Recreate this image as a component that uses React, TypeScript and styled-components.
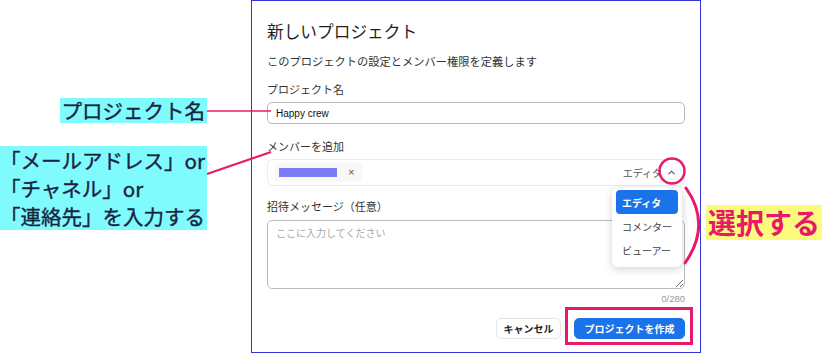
import React from "react";
import styled, { createGlobalStyle } from "styled-components";

const PINK = "#e8196b";
const BLUE = "#1a73e8";

const GlobalStyle = createGlobalStyle`
  html, body { margin: 0; padding: 0; background: #ffffff; }
  body { font-family: "Noto Sans CJK JP", "Noto Sans", sans-serif; }
  * { box-sizing: border-box; }
`;

const Stage = styled.div`
  position: relative;
  width: 822px;
  height: 354px;
  display: flex;
  overflow: hidden;
`;

const LeftColumn = styled.div`
  width: 251px;
  flex: none;
  display: flex;
  flex-direction: column;
  align-items: flex-end;
  padding: 98px 44px 0 0;
  gap: 23px;
`;

const Callout = styled.div<{ $lh: number }>`
  background: #80fbfd;
  color: #17243f;
  font-size: 20.5px;
  font-weight: 400;
  -webkit-text-stroke: 0.35px #17243f;
  line-height: ${(p) => p.$lh}px;
  white-space: nowrap;
  padding: 0 2px;
`;

const RightColumn = styled.div`
  flex: 1;
  padding: 205px 0 0 5px;
`;

const Highlight = styled.span`
  display: inline-block;
  background: #fbfb7e;
  color: ${PINK};
  font-size: 28px;
  font-weight: 700;
  line-height: 35px;
  padding: 0 2px;
  white-space: nowrap;
`;

const Dialog = styled.div`
  width: 450px;
  height: 353px;
  flex: none;
  border: 1px solid #3535d5;
  background: #fff;
  padding: 20px 15px 0 15px;
  display: flex;
  flex-direction: column;
`;

const Title = styled.h1`
  margin: 0;
  font-size: 16.7px;
  font-weight: 400;
  line-height: 20px;
  color: #1f1f1f;
`;

const Subtitle = styled.p`
  margin: 12px 0 0;
  font-size: 11.25px;
  line-height: 16px;
  color: #333;
`;

const Field = styled.div<{ $mt: number; $gap: number }>`
  margin-top: ${(p) => p.$mt}px;
  display: flex;
  flex-direction: column;
  gap: ${(p) => p.$gap}px;
`;

const Label = styled.label`
  font-size: 11px;
  line-height: 14px;
  color: #333;
`;

const TextInput = styled.div`
  height: 22px;
  border: 1px solid #b8b8b8;
  border-radius: 5px;
  padding: 0 8px;
  display: flex;
  align-items: center;
  font-family: "Liberation Sans", Arial, sans-serif;
  font-size: 10px;
  color: #111;
`;

const MemberBox = styled.div`
  position: relative;
  height: 27px;
  border: 1px solid #ececec;
  border-radius: 6px;
  display: flex;
  align-items: center;
  padding: 0 7px 0 7px;
`;

const Chip = styled.div`
  display: flex;
  align-items: center;
  gap: 11px;
  height: 19px;
  padding: 0 8px 0 4px;
  background: #f8f8f8;
  border-radius: 4px;
`;

const ChipSwatch = styled.span`
  display: block;
  width: 58px;
  height: 9px;
  background: #7c7cf6;
`;

const ChipClose = styled.span`
  font-family: "Liberation Sans", Arial, sans-serif;
  font-size: 11px;
  line-height: 1;
  color: #555;
`;

const RoleSelect = styled.div`
  margin-left: auto;
  display: flex;
  align-items: center;
  gap: 4px;
  font-size: 10px;
  color: #555;
`;

const Menu = styled.div`
  position: absolute;
  top: 28px;
  right: 2px;
  width: 70px;
  background: #fff;
  border-radius: 6px;
  box-shadow: 0 2px 8px rgba(0, 0, 0, 0.18);
  padding: 2px 4px 5px;
  display: flex;
  flex-direction: column;
  z-index: 2;
`;

const MenuItem = styled.div<{ $active?: boolean }>`
  height: 24px;
  display: flex;
  align-items: center;
  padding-left: 6px;
  border-radius: 4px;
  font-size: 10px;
  font-weight: ${(p) => (p.$active ? 700 : 400)};
  color: ${(p) => (p.$active ? "#fff" : "#444")};
  background: ${(p) => (p.$active ? BLUE : "transparent")};
`;

const TextArea = styled.textarea`
  display: block;
  width: 100%;
  height: 69px;
  border: 1px solid #bcbcbc;
  border-radius: 5px;
  padding: 5px 8px;
  font-family: "Noto Sans CJK JP", sans-serif;
  font-size: 10px;
  line-height: 14px;
  color: #333;
  background: #fff;
  outline: none;
  &::placeholder { color: #a8a8a8; }
`;

const Counter = styled.div`
  margin-top: 4px;
  text-align: right;
  font-family: "Liberation Sans", Arial, sans-serif;
  font-size: 9.5px;
  line-height: 12px;
  color: #9a9a9a;
`;

const Footer = styled.div`
  margin-top: 13px;
  display: flex;
  justify-content: flex-end;
  gap: 13px;
`;

const Button = styled.button<{ $primary?: boolean; $w: number }>`
  width: ${(p) => p.$w}px;
  height: 21px;
  border-radius: 5px;
  border: 1px solid ${(p) => (p.$primary ? BLUE : "#e4e4e4")};
  background: ${(p) => (p.$primary ? BLUE : "#fff")};
  color: ${(p) => (p.$primary ? "#fff" : "#222")};
  font-family: "Noto Sans CJK JP", sans-serif;
  font-size: 10px;
  font-weight: 700;
  padding: 0;
  display: flex;
  align-items: center;
  justify-content: center;
`;

const Overlay = styled.svg`
  position: absolute;
  left: 0;
  top: 0;
  pointer-events: none;
  z-index: 5;
`;

const ChevronUp = () => (
  <svg width="11" height="11" viewBox="0 0 12 12" fill="none">
    <polyline points="3,7.5 6,4.5 9,7.5" stroke="#555" strokeWidth="1.2" strokeLinecap="round" strokeLinejoin="round" />
  </svg>
);

export default function App() {
  return (
    <>
      <GlobalStyle />
      <Stage>
        <LeftColumn>
          <Callout $lh={25}>プロジェクト名</Callout>
          <Callout $lh={28}>
            「メールアドレス」or
            <br />
            「チャネル」or
            <br />
            「連絡先」を入力する
          </Callout>
        </LeftColumn>

        <Dialog>
          <Title>新しいプロジェクト</Title>
          <Subtitle>このプロジェクトの設定とメンバー権限を定義します</Subtitle>

          <Field $mt={13} $gap={6}>
            <Label>プロジェクト名</Label>
            <TextInput>Happy crew</TextInput>
          </Field>

          <Field $mt={15} $gap={6}>
            <Label>メンバーを追加</Label>
            <MemberBox>
              <Chip>
                <ChipSwatch />
                <ChipClose>×</ChipClose>
              </Chip>
              <RoleSelect>
                エディタ
                <ChevronUp />
              </RoleSelect>
              <Menu>
                <MenuItem $active>エディタ</MenuItem>
                <MenuItem>コメンター</MenuItem>
                <MenuItem>ビューアー</MenuItem>
              </Menu>
            </MemberBox>
          </Field>

          <Field $mt={13} $gap={7}>
            <Label>招待メッセージ（任意）</Label>
            <TextArea readOnly placeholder="ここに入力してください" />
          </Field>
          <Counter>0/280</Counter>

          <Footer>
            <Button $w={65}>キャンセル</Button>
            <Button $primary $w={111}>プロジェクトを作成</Button>
          </Footer>
        </Dialog>

        <RightColumn>
          <Highlight>選択する</Highlight>
        </RightColumn>

        <Overlay width="822" height="354" viewBox="0 0 822 354">
          <line x1="207" y1="111" x2="271" y2="111" stroke={PINK} strokeWidth="1.5" />
          <line x1="207" y1="174" x2="271" y2="152" stroke={PINK} strokeWidth="2" />
          <circle cx="672" cy="171" r="12.5" fill="none" stroke={PINK} strokeWidth="2.5" />
          <path d="M686 188 Q712 225 685 263" fill="none" stroke={PINK} strokeWidth="3" strokeLinecap="round" />
          <rect x="566.5" y="308.5" width="125" height="35" fill="none" stroke={PINK} strokeWidth="3" />
        </Overlay>
      </Stage>
    </>
  );
}
